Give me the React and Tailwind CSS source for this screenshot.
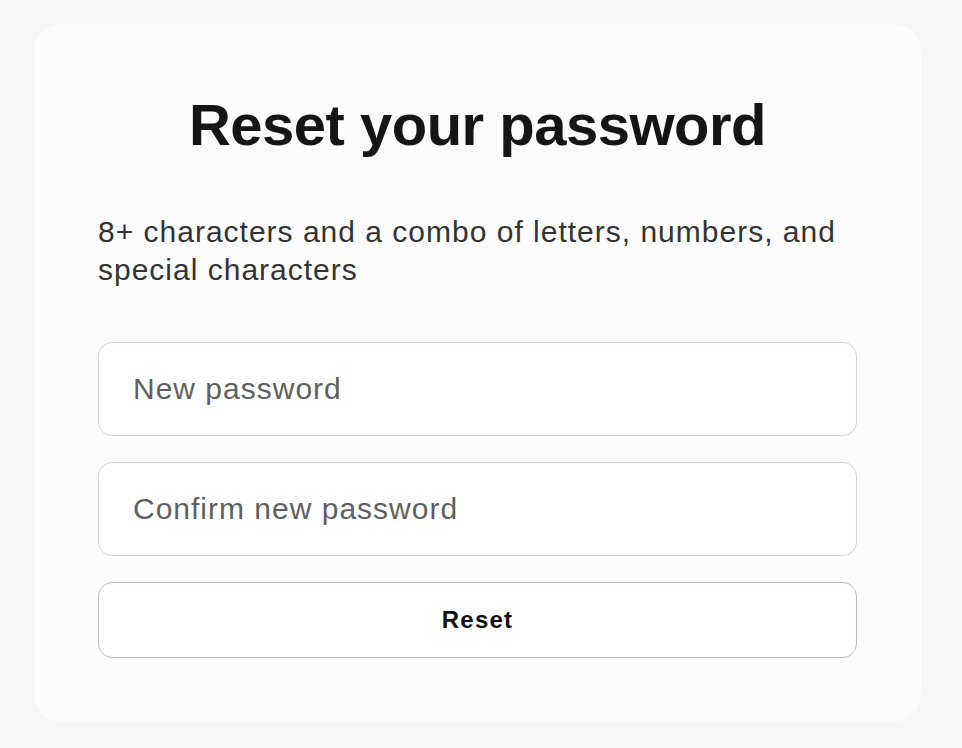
export default function App() {
  return (
    <div className="min-h-screen bg-[#f6f6f6] pt-[24px] pl-[34px] font-['Liberation_Sans',Arial,sans-serif]">
      <div className="w-[887px] h-[698px] rounded-[28px] bg-[#fcfcfc] px-[64px] pt-[72px] pb-[64px] flex flex-col">
        <h1 className="text-center text-[58px] leading-[58px] font-bold tracking-[-0.5px] text-[#151515]">
          Reset your password
        </h1>
        <p className="mt-[59px] text-[30px] leading-[38px] tracking-[1px] text-[#333333]">
          8+ characters and a combo of letters, numbers, and special characters
        </p>
        <form className="mt-[53px] flex flex-col gap-[26px]" onSubmit={(e) => e.preventDefault()}>
          <input
            type="password"
            placeholder="New password"
            className="h-[94px] w-full rounded-[14px] border-[1.5px] border-[#d2d0e8] bg-white px-[34px] text-[30px] tracking-[1px] text-[#222] placeholder:text-[#5f5f5f] outline-none"
          />
          <input
            type="password"
            placeholder="Confirm new password"
            className="h-[94px] w-full rounded-[14px] border-[1.5px] border-[#d2d0e8] bg-white px-[34px] text-[30px] tracking-[1px] text-[#222] placeholder:text-[#5f5f5f] outline-none"
          />
          <button
            type="submit"
            className="h-[76px] w-full rounded-[14px] border-[1.5px] border-[#bab8cc] bg-white text-[24px] font-bold tracking-[1.2px] text-[#111]"
          >
            Reset
          </button>
        </form>
      </div>
    </div>
  )
}
